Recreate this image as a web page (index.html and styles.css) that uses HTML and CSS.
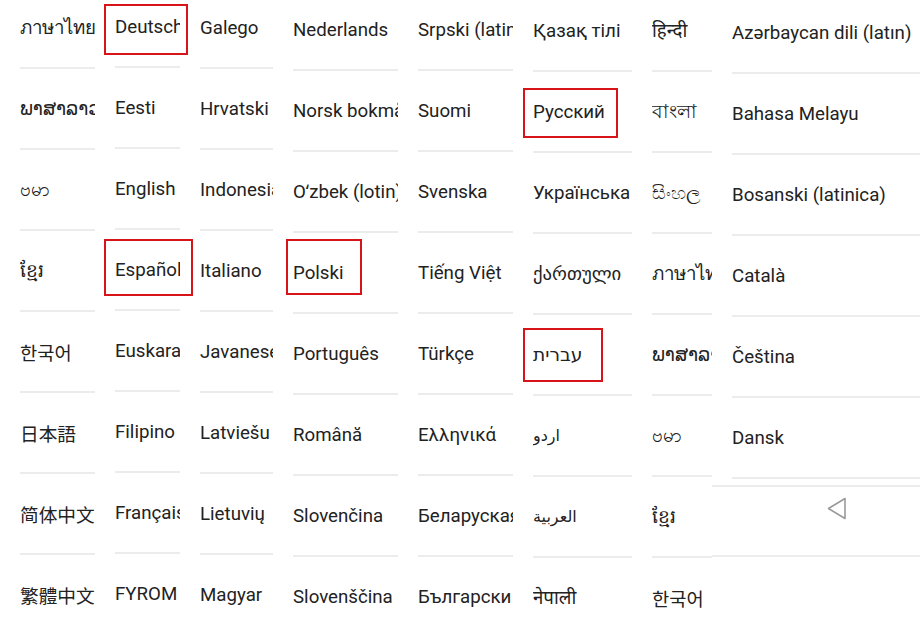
FILE: index.html
```html
<!DOCTYPE html>
<html>
<head>
<meta charset="utf-8">
<link rel="stylesheet" href="styles.css">
</head>
<body>
<div class="page">
  <div class="col c1">
    <div class="row"><span class="t">ภาษาไทย</span></div>
    <div class="row"><span class="t">ພາສາລາວ</span></div>
    <div class="row"><span class="t">ဗမာ</span></div>
    <div class="row"><span class="t">ខ្មែរ</span></div>
    <div class="row"><span class="t kr">한국어</span></div>
    <div class="row"><span class="t jp">日本語</span></div>
    <div class="row"><span class="t sc">简体中文</span></div>
    <div class="row"><span class="t tc">繁體中文</span></div>
  </div>
  <div class="col c2">
    <div class="row"><span class="t">Deutsch</span></div>
    <div class="row"><span class="t">Eesti</span></div>
    <div class="row"><span class="t">English</span></div>
    <div class="row"><span class="t">Español</span></div>
    <div class="row"><span class="t">Euskara</span></div>
    <div class="row"><span class="t">Filipino</span></div>
    <div class="row"><span class="t">Français</span></div>
    <div class="row"><span class="t">FYROM</span></div>
  </div>
  <div class="col c3">
    <div class="row"><span class="t">Galego</span></div>
    <div class="row"><span class="t">Hrvatski</span></div>
    <div class="row"><span class="t">Indonesia</span></div>
    <div class="row"><span class="t">Italiano</span></div>
    <div class="row"><span class="t">Javanese</span></div>
    <div class="row"><span class="t">Latviešu</span></div>
    <div class="row"><span class="t">Lietuvių</span></div>
    <div class="row"><span class="t">Magyar</span></div>
  </div>
  <div class="col c4">
    <div class="row"><span class="t">Nederlands</span></div>
    <div class="row"><span class="t">Norsk bokmål</span></div>
    <div class="row"><span class="t">Oʻzbek (lotin)</span></div>
    <div class="row"><span class="t">Polski</span></div>
    <div class="row"><span class="t">Português</span></div>
    <div class="row"><span class="t">Română</span></div>
    <div class="row"><span class="t">Slovenčina</span></div>
    <div class="row"><span class="t">Slovenščina</span></div>
  </div>
  <div class="col c5">
    <div class="row"><span class="t">Srpski (latinica)</span></div>
    <div class="row"><span class="t">Suomi</span></div>
    <div class="row"><span class="t">Svenska</span></div>
    <div class="row"><span class="t">Tiếng Việt</span></div>
    <div class="row"><span class="t">Türkçe</span></div>
    <div class="row"><span class="t">Ελληνικά</span></div>
    <div class="row"><span class="t">Беларуская</span></div>
    <div class="row"><span class="t">Български</span></div>
  </div>
  <div class="col c6">
    <div class="row"><span class="t">Қазақ тілі</span></div>
    <div class="row"><span class="t">Русский</span></div>
    <div class="row"><span class="t">Українська</span></div>
    <div class="row"><span class="t">ქართული</span></div>
    <div class="row"><span class="t">עברית</span></div>
    <div class="row"><span class="t small">اردو</span></div>
    <div class="row"><span class="t small">العربية</span></div>
    <div class="row"><span class="t">नेपाली</span></div>
  </div>
  <div class="col c7">
    <div class="row"><span class="t">हिन्दी</span></div>
    <div class="row"><span class="t">বাংলা</span></div>
    <div class="row"><span class="t">සිංහල</span></div>
    <div class="row"><span class="t">ภาษาไทย</span></div>
    <div class="row"><span class="t">ພາສາລາວ</span></div>
    <div class="row"><span class="t">ဗမာ</span></div>
    <div class="row"><span class="t">ខ្មែរ</span></div>
    <div class="row"><span class="t kr">한국어</span></div>
  </div>
  <div class="col c8">
    <div class="row"><span class="t">Azərbaycan dili (latın)</span></div>
    <div class="row"><span class="t">Bahasa Melayu</span></div>
    <div class="row"><span class="t">Bosanski (latinica)</span></div>
    <div class="row"><span class="t">Català</span></div>
    <div class="row"><span class="t">Čeština</span></div>
    <div class="row"><span class="t">Dansk</span></div>
    <div class="navbar">
      <svg class="back" width="20" height="23" viewBox="0 0 20 23"><polygon points="18,1.5 18,21.5 1.5,11.5" fill="none" stroke="#9a9a9a" stroke-width="1.6" stroke-linejoin="round"/></svg>
    </div>
  </div>

  <div class="mark m-deutsch"></div>
  <div class="mark m-espanol"></div>
  <div class="mark m-polski"></div>
  <div class="mark m-russkiy"></div>
  <div class="mark m-ivrit"></div>
</div>
</body>
</html>
```

FILE: styles.css
```css
html, body {
  margin: 0;
  padding: 0;
  background: #fff;
}
.page {
  position: relative;
  width: 920px;
  height: 620px;
  overflow: hidden;
  display: flex;
  align-items: flex-start;
  gap: 20px;
  padding-left: 20px;
  box-sizing: border-box;
  font-family: Roboto, "Noto Sans", "DejaVu Sans", "Noto Sans CJK SC", sans-serif;
  font-size: 18.7px;
  color: #222;
}
.col {
  display: flex;
  flex-direction: column;
  flex: none;
}
.row {
  height: 79px;
  border-bottom: 2px solid #ececec;
  display: flex;
  align-items: center;
}
.t {
  display: block;
  white-space: nowrap;
  overflow: hidden;
  width: 100%;
  line-height: 26px;
}
.small { font-size: 16px; }
.kr { font-family: "Noto Sans CJK KR", sans-serif; }
.jp { font-family: "Noto Sans CJK JP", sans-serif; }
.sc { font-family: "Noto Sans CJK SC", sans-serif; }
.tc { font-family: "Noto Sans CJK TC", sans-serif; }

.c1 { width: 75px; margin-top: -12px; }
.c2 { width: 65px; margin-top: -13px; }
.c3 { width: 73px; margin-top: -12px; }
.c4 { width: 105px; margin-top: -10px; }
.c5 { width: 95px; margin-top: -10px; }
.c6 { width: 99px; margin-top: -9px; }
.c7 { width: 60px; margin-top: -9px; }
.c8 { width: 188px; margin-top: -7px; }

.navbar {
  margin-left: -20px;
  margin-top: 6px;
  height: 58px;
  border-top: 2px solid #ececec;
  border-bottom: 2px solid #ececec;
  display: flex;
  justify-content: center;
  align-items: flex-start;
  padding-left: 42px;
  padding-top: 10px;
  box-sizing: content-box;
}

.mark {
  position: absolute;
  border: 2px solid #d7141a;
  box-sizing: border-box;
}
.m-deutsch { left: 104px; top: 4px; width: 84px; height: 51px; }
.m-espanol { left: 104px; top: 239px; width: 89px; height: 57px; }
.m-polski { left: 286px; top: 239px; width: 76px; height: 56px; }
.m-russkiy { left: 523px; top: 88px; width: 95px; height: 50px; }
.m-ivrit { left: 523px; top: 328px; width: 80px; height: 54px; }
```
